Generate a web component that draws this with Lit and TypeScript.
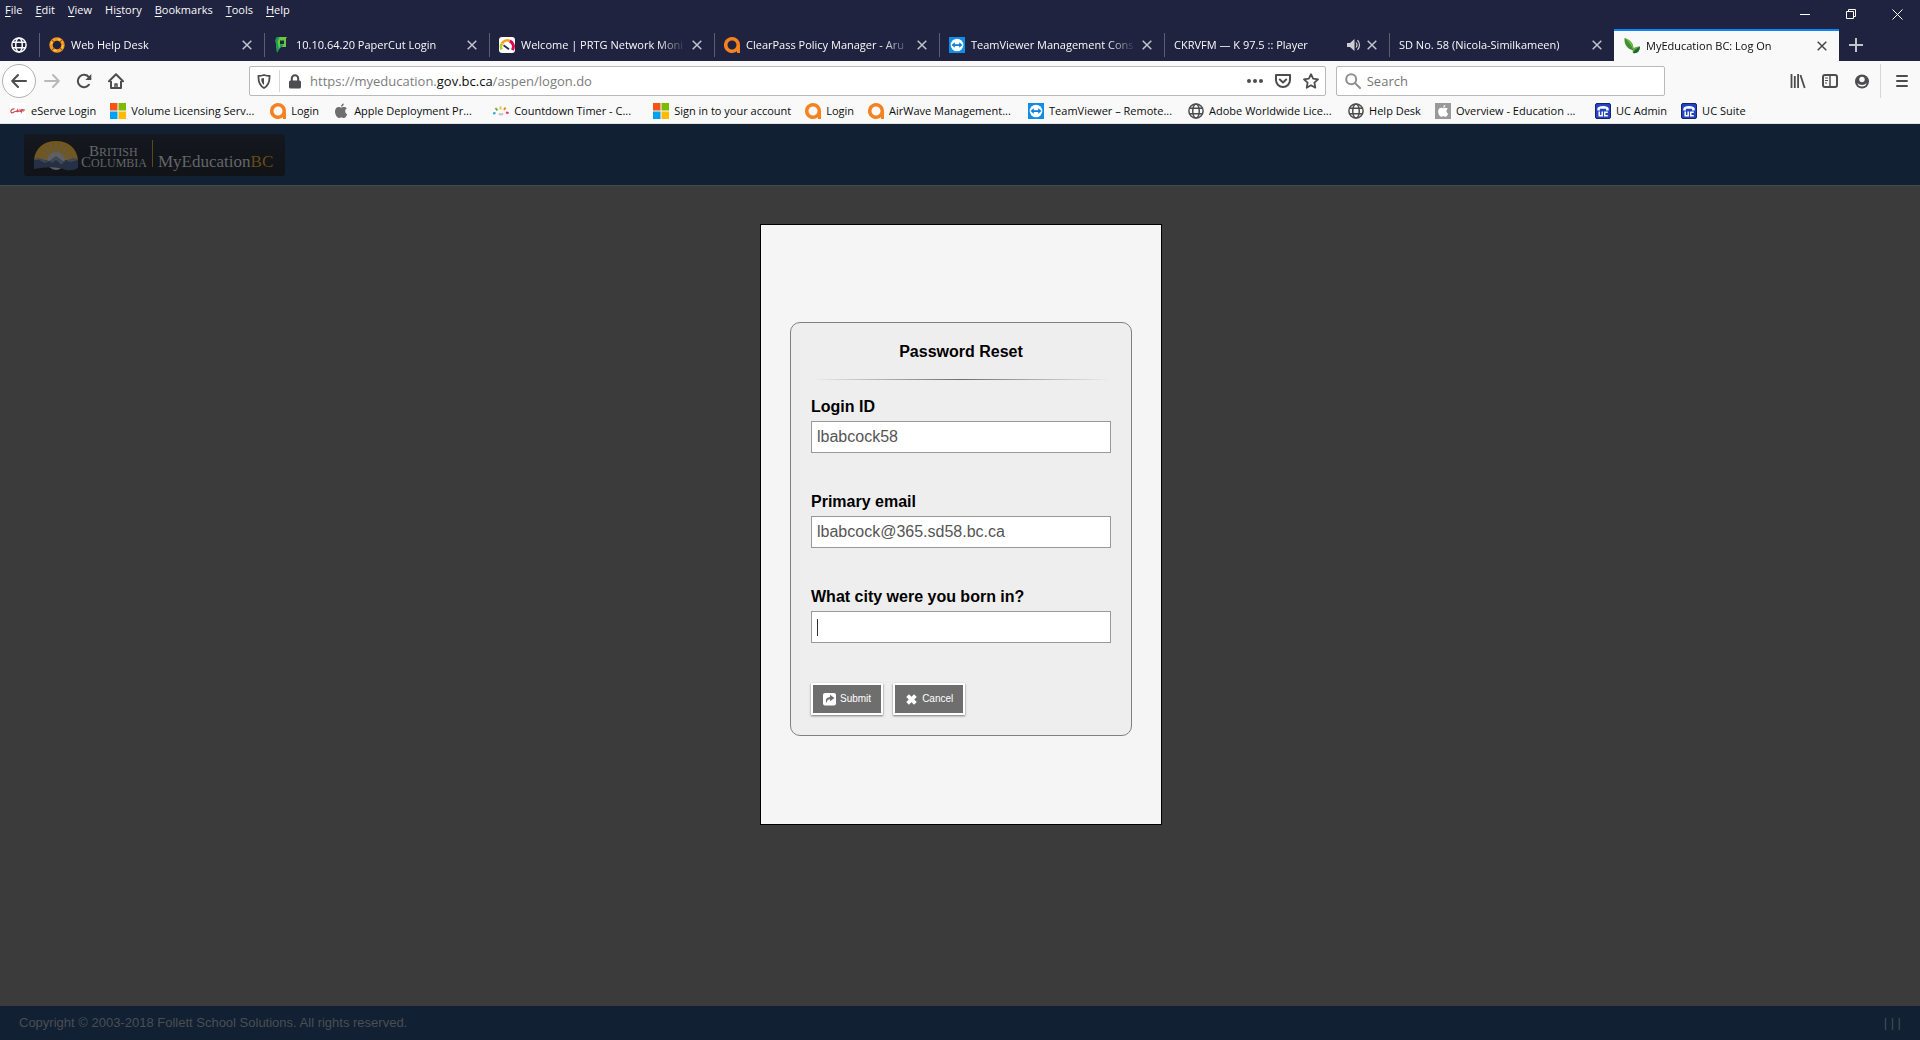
import { LitElement, html, css, svg, nothing, type TemplateResult } from "lit";
import { customElement } from "lit/decorators.js";
import { classMap } from "lit/directives/class-map.js";

const globe = html`<svg class="ico" viewBox="0 0 16 16" fill="none" stroke="currentColor" stroke-width="1.5">
  <circle cx="8" cy="8" r="7.1"/><ellipse cx="8" cy="8" rx="3.3" ry="7.1"/><path d="M1.6 5.3h12.8M1.6 10.7h12.8"/></svg>`;

const ring = html`<svg class="ico" viewBox="0 0 16 16" fill="none">
  <circle cx="8" cy="8" r="6" stroke="#f7941d" stroke-width="3.4"/>
  <circle cx="8" cy="8" r="5.8" stroke="#ffc33c" stroke-width="1.6" stroke-dasharray="5.500 3.6"/>
  <path d="M3 3l2 2M13 3l-2 2M3 13l2-2M13 13l-2-2" stroke="#a8520c" stroke-width="1.2"/></svg>`;

const paperCut = html`<svg class="ico" viewBox="0 0 16 16">
  <path d="M3 0h10l-1 1.500V10H6.500L3 15.600 1.500 3z" fill="#6cc644"/>
  <path d="M1.500 3L3 0h2.500L3.500 5 5 12l-2 3.600z" fill="#159a58"/>
  <path d="M6 3.500h4v3.500H6z" fill="#13332c"/><path d="M6.500 7l-1 5 4-4z" fill="#1c8c72"/></svg>`;

const gauge = html`<svg class="ico" viewBox="0 0 16 16" fill="none">
  <rect width="16" height="16" rx="3" fill="#fff"/>
  <path d="M2.500 12.500A6 6 0 0 1 3 6.500" stroke="#b8cf22" stroke-width="2.600"/>
  <path d="M3 6.500A6 6 0 0 1 10.800 4" stroke="#f7a01d" stroke-width="2.600"/>
  <path d="M10.800 4A6 6 0 0 1 13.300 13" stroke="#e2064f" stroke-width="3"/>
  <path d="M4.500 8.200l5.500 4" stroke="#1d2d4f" stroke-width="1.700"/></svg>`;

const aruba = html`<svg class="ico" viewBox="0 0 16 16">
  <path d="M8 0a8 8 0 1 0 5 14.200V16h3V8a8 8 0 0 0-8-8zm0 3.500a4.500 4.500 0 1 1 0 9 4.500 4.500 0 0 1 0-9z" fill="#f58220"/></svg>`;

const teamViewer = html`<svg class="ico" viewBox="0 0 16 16">
  <rect width="16" height="16" fill="#0e8ee9"/><circle cx="8" cy="8" r="6.300" fill="#fff"/>
  <path d="M2.500 8l3.300-2.700v1.900h4.400V5.300L13.500 8l-3.300 2.700V8.900H5.800v1.800z" fill="#0e7fd8"/></svg>`;

const leaf = html`<svg class="ico" viewBox="0 0 16 16">
  <path d="M.500 0C6 2 10 5 9.500 12.500 3.500 11 0 7 .500 0z" fill="#3f8f35"/><path d="M.500 0C6 2 10 5 9.500 12.500 8 8 5 3.500.500 0z" fill="#74b94a"/>
  <path d="M16 8.500c-5 0-8.500 2-7 6.500 4.500.800 7-1.500 7-6.500z" fill="#5eaa3a"/><path d="M9 15c1-3 3.500-4.500 7-6.500-.500 4.500-3 7.500-7 6.500z" fill="#22643a"/></svg>`;

const eServe = html`<svg class="ico" viewBox="0 0 16 16" fill="none">
  <rect width="16" height="16" fill="#fff"/>
  <path d="M4.500 6C2 5.500.500 7.500 1 9s2 .800 3.500-.300M4.500 8.500h2l1-1.500v2.200M8.300 9V7.200M9.800 9l.300-2 1.200 2 .500-3M13 8.700V6M12.200 7h3" stroke="#cf4a5b" stroke-width="1.200"/></svg>`;

const windowsLogo = html`<svg class="ico" viewBox="0 0 16 16">
  <path d="M0 0h7.500v7.500H0z" fill="#f65314"/><path d="M8.500 0H16v7.500H8.500z" fill="#7cbb00"/>
  <path d="M0 8.500h7.500V16H0z" fill="#00a1f1"/><path d="M8.500 8.500H16V16H8.500z" fill="#ffbb00"/></svg>`;

const applePath = svg`<path d="M10.800.500C9.300.700 8 2 8.100 3.700 9.700 3.700 10.900 2.200 10.800.500zM8.200 4.600C7.500 4.600 6.700 4 5.600 4 3.600 4 2 5.700 2 8.600c0 3 2 6.400 3.900 6.400.900 0 1.400-.600 2.500-.600s1.500.600 2.500.600c1.500 0 2.800-2.200 3.300-3.800-2.500-1.100-2.700-4.500-.300-5.900C13.100 4.400 12 4 11 4c-1.200 0-2 .600-2.800.600z"/>`;
const apple = html`<svg class="ico" viewBox="0 0 16 16" fill="#6e6e6e">${applePath}</svg>`;
const appleBox = html`<svg class="ico" viewBox="0 0 16 16"><rect width="16" height="16" fill="#999"/>
  <g fill="#fff" transform="translate(1.500 1.500) scale(.82)">${applePath}</g></svg>`;

const countdown = html`<svg class="ico" viewBox="0 0 16 16" fill="none" stroke-width="2">
  <path d="M0 10.500l2.500-.500" stroke="#2aa3d8"/><path d="M2.500 5l2 2.500" stroke="#61b346"/><path d="M7.500 3.500v3" stroke="#f2c230"/>
  <path d="M12.500 4.500L11 7" stroke="#ee8c2b"/><path d="M15.500 10l-2.500-.500" stroke="#e0305c"/><path d="M6 10.500q2 2 4 0" stroke="#c3c3c3"/></svg>`;

const phone = html`<svg class="ico" viewBox="0 0 16 16" fill="none">
  <rect x=".500" y=".500" width="15" height="15" rx="1.500" fill="#2444c0" stroke="#14226f"/>
  <path d="M2.300 7.500V5.500Q3 3 8 3t5.700 2.500v2h-2.600V5.800H4.900v1.700z" fill="#fff"/>
  <path d="M4.200 8.500v4.300h3V8.500M12.800 9.300H9.700v3.500h3.100" stroke="#fff" stroke-width="1.500"/></svg>`;

const closeIcon = html`<svg class="x" viewBox="0 0 10 10" fill="none" stroke="currentColor" stroke-width="1.500"><path d="M.700.700l8.600 8.600M9.300.700L.700 9.300"/></svg>`;
const speaker = html`<svg class="speaker" viewBox="0 0 14 12" fill="none" stroke="currentColor">
  <path d="M0 4h3l4.500-4v12L3 8H0z" fill="currentColor" stroke="none"/><path d="M9 3.500q2 2.500 0 5M10.500 1.200q4 4.800 0 9.600" stroke-width="1.200"/></svg>`;

const backIcon = html`<svg class="ico" viewBox="0 0 16 16" fill="none" stroke="currentColor" stroke-width="2" stroke-linecap="round" stroke-linejoin="round"><path d="M15 8H1.500M7 2L1.200 8 7 14"/></svg>`;
const forwardIcon = html`<svg class="ico" viewBox="0 0 16 16" fill="none" stroke="currentColor" stroke-width="2" stroke-linecap="round" stroke-linejoin="round"><path d="M1 8h13.500M9 2l5.800 6L9 14"/></svg>`;
const reloadIcon = html`<svg class="ico" viewBox="0 0 16 16" fill="none" stroke="currentColor" stroke-width="2" stroke-linecap="round"><path d="M13 4.300A6.200 6.200 0 1 0 13 11.700"/><path d="M15.300 1v6h-6z" fill="currentColor" stroke="none"/></svg>`;
const homeIcon = html`<svg class="ico" viewBox="0 0 16 16" fill="none" stroke="currentColor" stroke-width="2" stroke-linecap="round" stroke-linejoin="round"><path d="M1 8.200L8 1.300l7 6.900"/><path d="M3 8v7h10V8" stroke-linecap="butt"/><path d="M7 15v-4h2v4" stroke-width="1.500"/></svg>`;
const shieldIcon = html`<svg class="mid" viewBox="0 0 14 15" fill="none" stroke="currentColor" stroke-width="1.800"><path d="M7 1q3 1 5.500 1Q13 11 7 14 1 11 1.500 2 4 2 7 1z"/><path d="M7 4v7Q4 9 4.300 4.600z" fill="currentColor" stroke="none"/></svg>`;
const lockIcon = html`<svg class="mid" viewBox="0 0 14 15" fill="none"><rect x="1" y="6.500" width="12" height="8" rx="1.500" fill="currentColor"/><path d="M3.800 7V4.400a3.200 3.200 0 0 1 6.400 0V7" stroke="currentColor" stroke-width="2"/></svg>`;
const dotsIcon = html`<svg class="ico" viewBox="0 0 16 16" fill="currentColor"><circle cx="2" cy="8" r="2"/><circle cx="8" cy="8" r="2"/><circle cx="14" cy="8" r="2"/></svg>`;
const pocketIcon = html`<svg class="ico" viewBox="0 0 16 16" fill="none" stroke="currentColor" stroke-width="2" stroke-linecap="round" stroke-linejoin="round"><path d="M1 2h14v5a7 7 0 0 1-14 0z"/><path d="M4.800 6.500L8 9.500l3.200-3"/></svg>`;
const starIcon = html`<svg class="ico" viewBox="0 0 16 16" fill="none" stroke="currentColor" stroke-width="1.800" stroke-linejoin="round"><path d="M8 1.200l2.100 4.500 4.900.600-3.600 3.400.900 5L8 12.300l-4.300 2.400.900-5L1 6.300l4.900-.600z"/></svg>`;
const searchIcon = html`<svg class="ico" viewBox="0 0 16 16" fill="none" stroke="currentColor" stroke-width="2" stroke-linecap="round"><circle cx="6.200" cy="6.200" r="5"/><path d="M10 10l5 5"/></svg>`;
const libraryIcon = html`<svg class="ico" viewBox="0 0 16 16" fill="none" stroke="currentColor" stroke-width="1.800"><path d="M1.500 1v14M4.800 3v12M8.100 1v14" /><path d="M10.400 2l4.300 13"/></svg>`;
const sidebarIcon = html`<svg class="ico" viewBox="0 0 16 16" fill="none" stroke="currentColor"><rect x="1" y="2" width="14" height="12" rx="2" stroke-width="2"/><path d="M8 2v12" stroke-width="1.500"/><path d="M3 5h3M3 7.500h3M3 10h2"/></svg>`;
const accountIcon = html`<svg class="mid" viewBox="0 0 14 14"><circle cx="7" cy="7" r="7" fill="currentColor"/><circle cx="7" cy="5" r="2.700" fill="#f9f9fa"/><path d="M2.500 8.500Q4 10.500 7 10.500t4.500-2Q11 12 7 12T2.500 8.500z" fill="#f9f9fa"/></svg>`;
const burgerIcon = html`<svg class="ico" viewBox="0 0 16 16" stroke="currentColor" stroke-width="2" stroke-linecap="round"><path d="M3 3h10M3 8h10M3 13h10"/></svg>`;

interface Tab { title: string; icon?: TemplateResult; sound?: boolean; active?: boolean; }
interface Bookmark { title: string; icon: TemplateResult; wide?: boolean; }

const MENUS: [string, string, string][] = [
  ["", "F", "ile"], ["", "E", "dit"], ["", "V", "iew"], ["Hi", "s", "tory"], ["", "B", "ookmarks"], ["", "T", "ools"], ["", "H", "elp"],
];

const TABS: Tab[] = [
  { title: "Web Help Desk", icon: ring },
  { title: "10.10.64.20 PaperCut Login", icon: paperCut },
  { title: "Welcome | PRTG Network Moni", icon: gauge },
  { title: "ClearPass Policy Manager - Aru", icon: aruba },
  { title: "TeamViewer Management Cons", icon: teamViewer },
  { title: "CKRVFM — K 97.5 :: Player", sound: true },
  { title: "SD No. 58 (Nicola-Similkameen)" },
  { title: "MyEducation BC: Log On", icon: leaf, active: true },
];

const BOOKMARKS: Bookmark[] = [
  { title: "eServe Login", icon: eServe },
  { title: "Volume Licensing Serv...", icon: windowsLogo, wide: true },
  { title: "Login", icon: aruba },
  { title: "Apple Deployment Pr...", icon: apple, wide: true },
  { title: "Countdown Timer - C...", icon: countdown, wide: true },
  { title: "Sign in to your account", icon: windowsLogo },
  { title: "Login", icon: aruba },
  { title: "AirWave Management...", icon: aruba, wide: true },
  { title: "TeamViewer – Remote...", icon: teamViewer, wide: true },
  { title: "Adobe Worldwide Lice...", icon: globe, wide: true },
  { title: "Help Desk", icon: globe },
  { title: "Overview - Education ...", icon: appleBox, wide: true },
  { title: "UC Admin", icon: phone },
  { title: "UC Suite", icon: phone },
];

const base = css`
  * { box-sizing: border-box; }
  button { font: inherit; color: inherit; background: none; border: 0; padding: 0; }
  svg { display: block; flex: none; }
  .ico { width: 16px; height: 16px; }
  .mid { width: 14px; height: 15px; }
`;

@customElement("browser-chrome")
class BrowserChrome extends LitElement {
  static styles = [base, css`
    :host { display: block; font: 12px/16px "Open Sans", "Noto Sans", sans-serif; color: #0c0c0d; }
    .title { display: flex; justify-content: space-between; height: 29px; background: #202340; color: #f9f9fa; }
    .menus { display: flex; gap: 13px; padding: 2px 5px; font-size: 11px; }
    .menus button { height: 16px; }
    .key { text-decoration: underline; text-underline-offset: 2px; }
    .controls { display: flex; }
    .controls button { display: grid; place-items: center; width: 46px; height: 28px; }
    .glyph { width: 11px; height: 11px; }
    .tabs { display: flex; height: 32px; background: #202340; color: #f9f9fa; }
    .pin { display: grid; place-items: center; width: 39px; padding-right: 2px; }
    .tab { display: flex; align-items: center; flex: 0 1 225px; min-width: 0; position: relative; padding: 0 12px 0 10px; font-size: 11px; }
    .tab::before { content: ""; position: absolute; left: 0; top: 4px; height: 24px; border-left: 1px solid #5b5d72; }
    .tab.active { background: #f9f9fa; color: #0c0c0d; border-top: 2px solid #0a84ff; }
    .tab.active::before { display: none; }
    .tab .ico { margin-right: 6px; }
    .name { flex: 1; min-width: 0; overflow: hidden; white-space: nowrap; text-align: left;
      mask-image: linear-gradient(to left, transparent, #000 28px); }
    .x { width: 10px; height: 10px; }
    .close { margin-left: 6px; opacity: .75; }
    .speaker { width: 14px; height: 12px; opacity: .8; }
    .plus { display: grid; place-items: center; width: 34px; opacity: .75; }
    .nav { display: flex; align-items: center; height: 40px; padding: 0 2px; background: #f9f9fa; color: #4d4d4f; }
    .tool { display: grid; place-items: center; flex: none; width: 32px; height: 34px; }
    .nav .back { width: 34px; background: #fff; border: 1px solid #b1b1b3; border-radius: 50%; }
    .off { color: #b9b9ba; }
    .space { flex: 117 1 0; }
    .field { display: flex; align-items: center; height: 30px; min-width: 0; background: #fff; border: 1px solid #b9b9bb; border-radius: 2px; }
    .address { flex: 1061 1 0; gap: 8px; padding: 0 6px 0 7px; }
    .page-tools { display: flex; gap: 12px; }
    .split { align-self: stretch; margin: 3px 0; border-left: 1px solid #d7d7db; }
    .url { flex: 1; min-width: 0; font-size: 13px; color: #7c7c7d; white-space: nowrap; overflow: hidden; }
    .url b { font-weight: 400; color: #0c0c0d; }
    .search { flex: 311 1 0; margin-left: 10px; gap: 6px; padding: 0 8px; color: #8f8f90; }
    .search input { flex: 1; min-width: 0; border: 0; outline: 0; padding: 0; background: none; font: inherit; font-size: 13px; }
    .search input::placeholder { color: #757575; opacity: 1; }
    .bar { align-self: stretch; margin: 3px 5px 3px 2px; border-left: 1px solid #d7d7db; }
    .marks { display: flex; align-items: center; height: 23px; padding: 0 10px 3px; background: #f9f9fa; overflow: hidden; border-bottom: 1px solid #e1e1e2; }
    .mark { display: flex; align-items: center; gap: 5px; flex: none; margin-right: 14px; color: inherit; text-decoration: none; white-space: nowrap; font-size: 11px; }
    .mark .ico { color: #4d4d4f; }
    .wide { width: 146px; }
  `];

  render() {
    return html`
      <div class="title">
        <nav class="menus">${MENUS.map(([a, k, z]) => html`<button>${a}<span class="key">${k}</span>${z}</button>`)}</nav>
        <div class="controls">
          <button aria-label="Minimize"><svg class="glyph" viewBox="0 0 11 11" stroke="#fff"><path d="M0 5.500h10"/></svg></button>
          <button aria-label="Restore"><svg class="glyph" viewBox="0 0 11 11" fill="none" stroke="#fff"><path d="M.500 2.500h7v7h-7zM2.500 2.500v-2h7v7h-2"/></svg></button>
          <button aria-label="Close window"><svg class="glyph" viewBox="0 0 11 11" stroke="#fff"><path d="M.500.500l10 10M10.500.500l-10 10"/></svg></button>
        </div>
      </div>
      <div class="tabs">
        <button class="pin" aria-label="Pinned tab">${globe}</button>
        ${TABS.map((t) => html`<div class=${classMap({ tab: true, active: !!t.active })}>
          ${t.icon ?? nothing}<span class="name">${t.title}</span>${t.sound ? speaker : nothing}
          <button class="close" aria-label="Close tab">${closeIcon}</button></div>`)}
        <button class="plus" aria-label="New tab"><svg class="ico" viewBox="0 0 16 16" stroke="currentColor" stroke-width="2"><path d="M8 1v14M1 8h14"/></svg></button>
      </div>
      <div class="nav">
        <button class="tool back" aria-label="Back">${backIcon}</button>
        <button class="tool off" aria-label="Forward">${forwardIcon}</button>
        <button class="tool" aria-label="Reload">${reloadIcon}</button>
        <button class="tool" aria-label="Home">${homeIcon}</button>
        <div class="space"></div>
        <div class="field address">
          ${shieldIcon}<span class="split"></span>${lockIcon}
          <span class="url">https://myeducation.<b>gov.bc.ca</b>/aspen/logon.do</span>
          <span class="page-tools">
            <button aria-label="Page actions">${dotsIcon}</button>
            <button aria-label="Save to Pocket">${pocketIcon}</button>
            <button aria-label="Bookmark this page">${starIcon}</button>
          </span>
        </div>
        <label class="field search">${searchIcon}<input type="text" placeholder="Search" aria-label="Search"></label>
        <div class="space"></div>
        <button class="tool" aria-label="Library">${libraryIcon}</button>
        <button class="tool" aria-label="Sidebars">${sidebarIcon}</button>
        <button class="tool" aria-label="Account">${accountIcon}</button>
        <span class="bar"></span>
        <button class="tool" aria-label="Menu">${burgerIcon}</button>
      </div>
      <nav class="marks">
        ${BOOKMARKS.map((b) => html`<a href="#" class=${classMap({ mark: true, wide: !!b.wide })}>${b.icon}<span>${b.title}</span></a>`)}
      </nav>`;
  }
}

@customElement("brand-logo")
class BrandLogo extends LitElement {
  static styles = css`
    :host { display: block; }
    .logo { display: block; width: 261px; height: 42px; border-radius: 3px; background: linear-gradient(#14181f, #101317); }
    .word { font-family: "Liberation Serif", serif; fill: #64666a; }
    .cap { font-size: 15px; }
    .small { font-size: 12px; }
    .product { font-size: 17px; }
    .gold { fill: #664b14; }
  `;

  render() {
    const rays = [-75, -56, -38, -19, 0, 19, 38, 56, 75];
    return html`<svg class="logo" viewBox="0 0 261 42" role="img" aria-label="British Columbia MyEducationBC">
      <path d="M10 26C11 14 20 7 32 7s21 7 22 19z" fill="#72561c"/>
      <g stroke="#5f5c50" stroke-width="1.300">${rays.map((a) => svg`<path d="M32 27V9" transform="rotate(${a} 32 27)"/>`)}</g>
      <circle cx="32" cy="27" r="9" fill="#5f6062"/>
      <path d="M10 25l5-1 6 2 4 1 7-5 7 5 5-1 5-2 5 1v4H10z" fill="#3f4654"/>
      <path d="M10 26l5 0 6 3 4-2 3 2 4-3 5 4 5-3 5 1 7-2v8q-4 3-12 2-12-5-32-1z" fill="#263044"/>
      <text class="word" x="65" y="22"><tspan class="cap">B</tspan><tspan class="small">RITISH</tspan></text>
      <text class="word" x="57" y="33"><tspan class="cap">C</tspan><tspan class="small">OLUMBIA</tspan></text>
      <path d="M128.500 6v27" stroke="#5e4717"/>
      <text class="word product" x="134" y="33">MyEducation<tspan class="gold">BC</tspan></text>
    </svg>`;
  }
}

@customElement("reset-dialog")
class ResetDialog extends LitElement {
  static styles = [base, css`
    :host { display: block; font: 16px/18px "Liberation Sans", Arial, sans-serif; color: #000; }
    .dialog { padding: 97px 29px 88px; background: #f5f5f5; border: 1px solid #000; }
    .card { display: flex; flex-direction: column; width: 342px; padding: 20px; background: #eee; border: 1px solid #808080; border-radius: 10px; }
    .heading { margin: 0; font-size: 16px; line-height: 18px; text-align: center; }
    .rule { height: 1px; margin: 18px 0; background: linear-gradient(to right, transparent, #6e6e6e, transparent); }
    .row { display: grid; gap: 5px; margin-bottom: 40px; }
    .label { font-weight: 700; }
    .box { position: relative; display: grid; }
    .input { height: 32px; width: 100%; padding: 0 5px; border: 1px solid #999; border-radius: 0; background: #fff; color: #555; font: inherit; outline: 0; }
    .caret { position: absolute; left: 6px; top: 8px; width: 1px; height: 17px; background: #333; }
    .actions { display: flex; gap: 10px; }
    .action { display: flex; align-items: center; gap: 4px; height: 32px; padding: 0 10px; color: #fff; background: #6e6e6e; border: 2px solid #fff; box-shadow: 0 1px 2px rgba(0, 0, 0, .5); font-size: 10px; line-height: 16px; }
    .mark { width: 13px; height: 13px; }
  `];

  render() {
    return html`<form class="dialog" @submit=${(e: Event) => e.preventDefault()}>
      <div class="card">
        <h1 class="heading">Password Reset</h1>
        <div class="rule"></div>
        <div class="row"><label class="label" for="login">Login ID</label>
          <div class="box"><input class="input" id="login" type="text" .value=${"lbabcock58"}></div></div>
        <div class="row"><label class="label" for="email">Primary email</label>
          <div class="box"><input class="input" id="email" type="text" .value=${"lbabcock@365.sd58.bc.ca"}></div></div>
        <div class="row"><label class="label" for="city">What city were you born in?</label>
          <div class="box"><input class="input" id="city" type="text"><span class="caret"></span></div></div>
        <div class="actions">
          <button class="action" type="submit"><svg class="mark" viewBox="0 0 13 13"><rect y="0" width="13" height="12.500" rx="2" fill="#fff"/><path d="M7 1.800L11.500 5 7 8.300V6.300Q4 6.200 3.600 10.300 1 5 7 4z" fill="#6e6e6e"/></svg>Submit</button>
          <button class="action" type="button"><svg class="mark" viewBox="0 0 13 13" stroke="#fff" stroke-width="3.800"><path d="M2.600 2.600l7.800 7.800M10.400 2.600l-7.800 7.800"/></svg>Cancel</button>
        </div>
      </div>
    </form>`;
  }
}

@customElement("app-root")
class AppRoot extends LitElement {
  static styles = css`
    :host { display: flex; flex-direction: column; min-height: 100vh; background: #3b3b3b; font: 13px/16px "Liberation Sans", Arial, sans-serif; }
    .header { padding: 10px 24px 9px; background: #112032; border-bottom: 1px solid #4a4a4a; }
    .main { flex: 1; display: flex; justify-content: center; align-items: flex-start; padding: 38px 0 38px 2px; }
    .footer { display: flex; justify-content: space-between; padding: 9px 19px; background: #112032; color: #4b4e52; }
  `;

  render() {
    return html`
      <browser-chrome></browser-chrome>
      <header class="header"><brand-logo></brand-logo></header>
      <main class="main"><reset-dialog></reset-dialog></main>
      <footer class="footer"><span>Copyright © 2003-2018 Follett School Solutions. All rights reserved.</span><span>| | |</span></footer>`;
  }
}
